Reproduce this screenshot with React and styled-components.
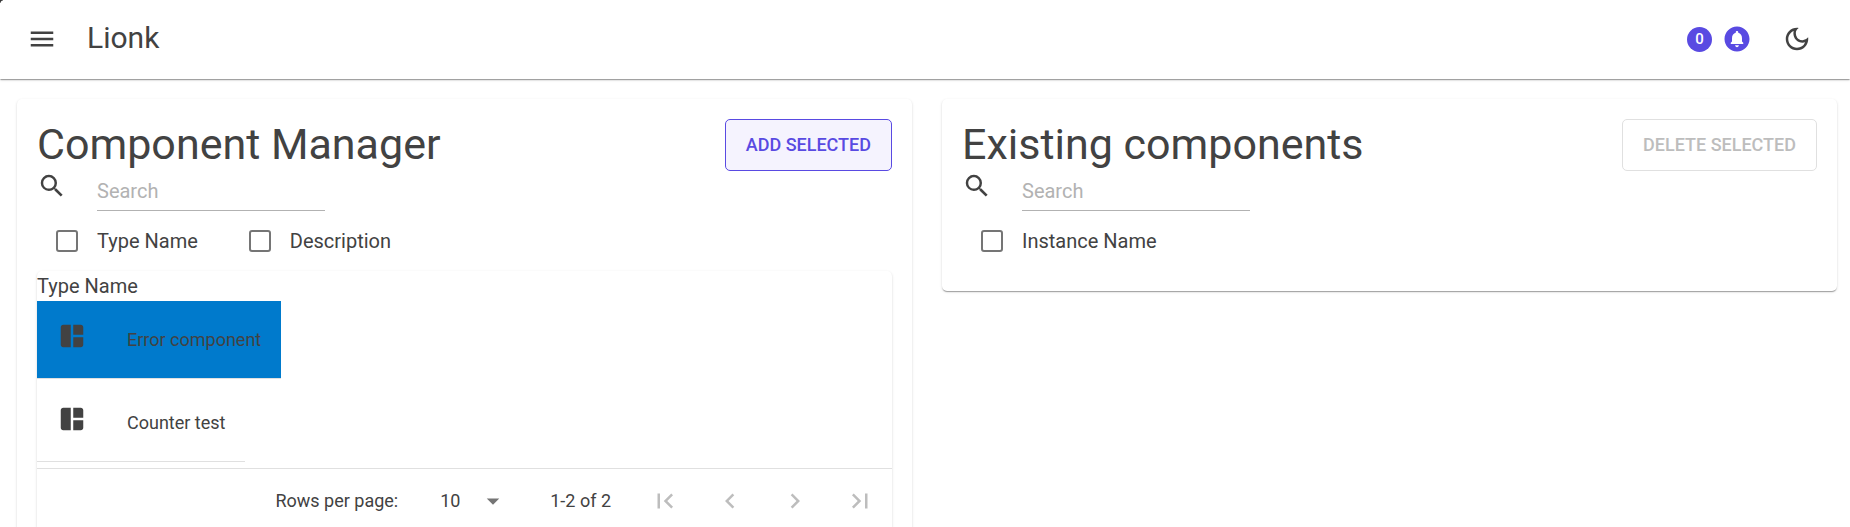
import React, { useId, useState } from "react";
import styled, { createGlobalStyle, css } from "styled-components";
import {
  MdMenu,
  MdSearch,
  MdOutlineDarkMode,
  MdCircleNotifications,
  MdFirstPage,
  MdLastPage,
  MdChevronLeft,
  MdChevronRight,
  MdArrowDropDown,
} from "react-icons/md";

const color = {
  text: "#424242",
  primary: "#594ae2",
  muted: "#b2b2b2",
  disabled: "#bdbdbd",
  line: "#e0e0e0",
  control: "#757575",
  selected: "#007acc",
};

const elevation = css`
  box-shadow: 0 2px 1px -1px rgba(0, 0, 0, 0.2), 0 1px 1px 0 rgba(0, 0, 0, 0.14),
    0 1px 3px 0 rgba(0, 0, 0, 0.12);
`;

const GlobalStyle = createGlobalStyle`
  *, *::before, *::after { box-sizing: border-box; }
  html, body { margin: 0; background: #fff; }
  body {
    color: ${color.text};
    font-family: Roboto, "Liberation Sans", sans-serif;
    font-size: 20px;
    line-height: 30px;
  }
  button, input, select { font: inherit; color: inherit; }
  svg { display: block; flex: none; }
`;

const AppBar = styled.header`
  position: relative;
  display: flex;
  align-items: center;
  height: 79px;
  padding: 0 23px 1px 12px;
  background: #fff;
  ${elevation}

  &::before {
    content: "";
    position: absolute;
    top: 0;
    left: 0;
    width: 3px;
    height: 3px;
    background: radial-gradient(circle at 100% 100%, transparent 2px, #333 3px);
  }
`;

const IconButton = styled.button`
  display: flex;
  padding: 15px;
  border: 0;
  border-radius: 50%;
  background: none;
  cursor: pointer;

  &:disabled {
    color: ${color.disabled};
    cursor: default;
  }
`;

const Brand = styled.h1`
  margin: 0 auto 0 15px;
  font-size: 30px;
  font-weight: 400;
  line-height: 38px;
  padding-bottom: 2px;
`;

const Status = styled.div`
  display: flex;
  align-items: center;
  gap: 10px;
  margin-right: 15px;
  color: ${color.primary};
`;

const Count = styled.span`
  display: flex;
  align-items: center;
  justify-content: center;
  width: 25px;
  height: 25px;
  border-radius: 50%;
  background: ${color.primary};
  color: #fff;
  font-size: 15px;
  font-weight: 500;
  line-height: 15px;
`;

const Main = styled.main`
  display: grid;
  grid-template-columns: repeat(2, minmax(0, 1fr));
  align-items: start;
  gap: 30px;
  padding: 20px 13px 20px 17px;
`;

const Card = styled.section`
  padding: 20px;
  border-radius: 5px;
  background: #fff;
  ${elevation}
`;

const CardHeader = styled.div`
  display: flex;
  align-items: flex-start;
  justify-content: space-between;
  height: 52px;
`;

const CardTitle = styled.h2`
  margin: 0;
  font-size: 43px;
  font-weight: 400;
  line-height: 50px;
`;

const OutlinedButton = styled.button`
  height: 52px;
  padding: 0 20px;
  border: 1px solid ${color.primary};
  border-radius: 5px;
  background: #f5f3fe;
  color: ${color.primary};
  font-size: 18px;
  font-weight: 500;
  text-transform: uppercase;
  cursor: pointer;

  &:disabled {
    border-color: ${color.line};
    background: none;
    color: ${color.disabled};
    cursor: default;
  }
`;

const SearchRow = styled.label`
  display: flex;
  gap: 30px;
  height: 40px;
`;

const SearchInput = styled.input`
  width: 228px;
  height: 40px;
  padding: 0;
  border: 0;
  border-bottom: 1px solid ${color.muted};
  border-radius: 0;
  outline: 0;
  background: none;

  &::placeholder {
    color: ${color.muted};
    opacity: 1;
  }
`;

const Filters = styled.div`
  display: flex;
  gap: 32px;
  height: 60px;
`;

const FilterLabel = styled.label`
  display: flex;
  align-items: center;
  gap: 19px;
  padding-left: 19px;
`;

const Checkbox = styled.input`
  appearance: none;
  width: 22px;
  height: 22px;
  margin: 0;
  border: 2px solid ${color.control};
  border-radius: 3px;

  &:checked {
    border-color: ${color.primary};
    background: ${color.primary};
  }
`;

const Panel = styled.div`
  border-radius: 5px;
  background: #fff;
  ${elevation}
`;

const ColumnHeading = styled.div`
  height: 30px;
`;

const Rows = styled.div`
  display: flex;
  flex-direction: column;
  align-items: flex-start;
  gap: 5px;
  padding-bottom: 6px;
`;

const RowTable = styled.table`
  border-collapse: separate;
  border-spacing: 0;
`;

const Cell = styled.td`
  height: 78px;
  padding: 0 20px;
  border-bottom: 1px solid ${color.line};
  background: ${(p) => (p.$selected ? color.selected : "none")};
  background-clip: padding-box;
  font-size: 18px;
`;

const IconCell = styled(Cell)`
  padding: 20px;
  vertical-align: top;
`;

const Pager = styled.div`
  display: flex;
  align-items: center;
  justify-content: flex-end;
  height: 64px;
  padding-right: 2px;
  border-top: 1px solid ${color.line};
  font-size: 18px;
`;

const PageSize = styled.label`
  display: flex;
  align-items: center;
  gap: 42px;
`;

const SelectBox = styled.span`
  display: grid;
  align-items: center;
  width: 68px;
  color: ${color.control};

  & > * {
    grid-area: 1 / 1;
  }

  & > svg {
    justify-self: end;
    pointer-events: none;
  }
`;

const Select = styled.select`
  appearance: none;
  width: 100%;
  padding: 0;
  border: 0;
  background: none;
  color: ${color.text};
`;

const Range = styled.span`
  margin: 0 24px 0 42px;
`;

const PageButtons = styled.div`
  display: flex;
  gap: 5px;
`;

const ICON = 30;

function DashboardIcon() {
  return (
    <svg width={ICON} height={ICON} viewBox="0 0 24 24" fill="currentColor" aria-hidden="true">
      <path d="M11 3v18H5c-1.1 0-2-.9-2-2V5c0-1.1.9-2 2-2zM13 3h6c1.1 0 2 .9 2 2v6h-8zM13 13h8v6c0 1.1-.9 2-2 2h-6z" />
    </svg>
  );
}

function Filter({ label }) {
  const id = useId();
  return (
    <FilterLabel htmlFor={id}>
      <Checkbox id={id} type="checkbox" />
      {label}
    </FilterLabel>
  );
}

function ManagerCard({ title, action, disabled, filters, children }) {
  return (
    <Card>
      <CardHeader>
        <CardTitle>{title}</CardTitle>
        <OutlinedButton type="button" disabled={disabled}>
          {action}
        </OutlinedButton>
      </CardHeader>
      <SearchRow>
        <MdSearch size={ICON} />
        <SearchInput type="text" placeholder="Search" aria-label="Search" />
      </SearchRow>
      <Filters>
        {filters.map((f) => (
          <Filter key={f} label={f} />
        ))}
      </Filters>
      {children}
    </Card>
  );
}

const componentTypes = ["Error component", "Counter test"];

export default function App() {
  const [selected, setSelected] = useState(componentTypes[0]);
  return (
    <>
      <GlobalStyle />
      <AppBar>
        <IconButton type="button" aria-label="Menu">
          <MdMenu size={ICON} />
        </IconButton>
        <Brand>Lionk</Brand>
        <Status>
          <Count>0</Count>
          <MdCircleNotifications size={ICON} />
        </Status>
        <IconButton type="button" aria-label="Dark mode">
          <MdOutlineDarkMode size={ICON} />
        </IconButton>
      </AppBar>
      <Main>
        <ManagerCard
          title="Component Manager"
          action="Add selected"
          filters={["Type Name", "Description"]}
        >
          <Panel>
            <ColumnHeading>Type Name</ColumnHeading>
            <Rows>
              {componentTypes.map((name) => (
                <RowTable key={name} onClick={() => setSelected(name)}>
                  <tbody>
                    <tr>
                      <IconCell $selected={name === selected}>
                        <DashboardIcon />
                      </IconCell>
                      <Cell $selected={name === selected}>{name}</Cell>
                    </tr>
                  </tbody>
                </RowTable>
              ))}
            </Rows>
            <Pager>
              <PageSize>
                Rows per page:
                <SelectBox>
                  <Select defaultValue="10">
                    <option>10</option>
                    <option>25</option>
                    <option>50</option>
                  </Select>
                  <MdArrowDropDown size={ICON} />
                </SelectBox>
              </PageSize>
              <Range>1-2 of 2</Range>
              <PageButtons>
                <IconButton type="button" aria-label="First page" disabled>
                  <MdFirstPage size={ICON} />
                </IconButton>
                <IconButton type="button" aria-label="Previous page" disabled>
                  <MdChevronLeft size={ICON} />
                </IconButton>
                <IconButton type="button" aria-label="Next page" disabled>
                  <MdChevronRight size={ICON} />
                </IconButton>
                <IconButton type="button" aria-label="Last page" disabled>
                  <MdLastPage size={ICON} />
                </IconButton>
              </PageButtons>
            </Pager>
          </Panel>
        </ManagerCard>
        <ManagerCard
          title="Existing components"
          action="Delete selected"
          disabled
          filters={["Instance Name"]}
        />
      </Main>
    </>
  );
}
